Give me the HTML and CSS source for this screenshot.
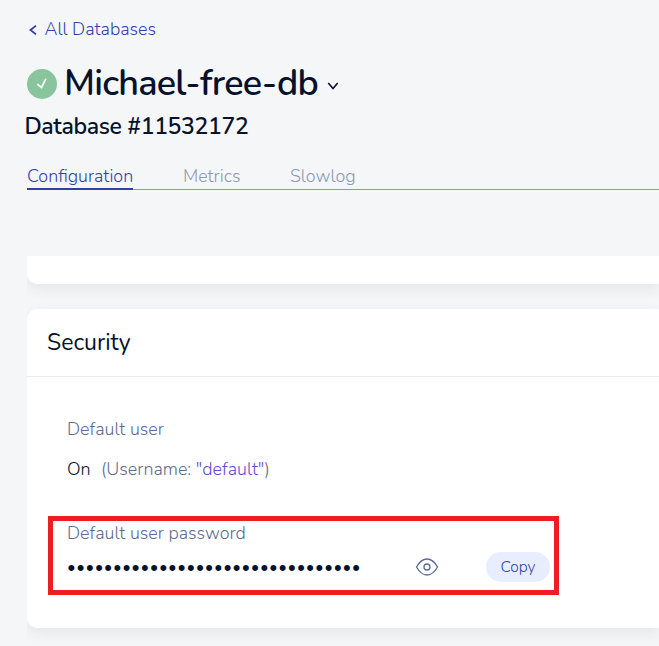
FILE: index.html
```html
<!DOCTYPE html>
<html lang="en">
<head>
<meta charset="utf-8">
<title>Michael-free-db</title>
<link rel="stylesheet" href="styles.css">
</head>
<body>
<main class="page">
  <a class="back"><svg class="back-icon" width="8" height="12" viewBox="0 0 8 12"><path d="M7 1.6 1.5 6 7 10.4"/></svg><span>All Databases</span></a>
  <header class="heading">
    <svg class="status" width="30" height="30" viewBox="0 0 30 30"><circle cx="15" cy="15" r="15"/><path d="M10.8 15.5 14.5 18.5 18.6 10.3"/></svg>
    <h1 class="title">Michael-free-db</h1>
    <svg class="chevron" width="12" height="10" viewBox="0 0 12 10"><path d="M1.3 2 6 7.5 10.7 2"/></svg>
  </header>
  <p class="subtitle">Database #11532172</p>
  <nav class="tabs">
    <a class="tab active"><span>Configuration</span></a>
    <a class="tab metrics"><span>Metrics</span></a>
    <a class="tab slowlog"><span>Slowlog</span></a>
  </nav>
  <div class="scroll">
    <section class="card previous"></section>
    <section class="card security">
      <h2 class="card-title"><span>Security</span></h2>
      <div class="card-body">
        <div class="label user-label">Default user</div>
        <div class="user-row"><span class="on">On</span><span class="username">(Username: <span class="value">"default"</span>)</span></div>
        <div class="password-box">
          <div class="label password-label">Default user password</div>
          <div class="password-row">
            <span class="dots">••••••••••••••••••••••••••••••••</span>
            <svg class="eye" width="24" height="20" viewBox="0 0 24 20"><path d="M1.5 10C4.6 4.5 7.8 2 12 2S19.4 4.5 22.5 10C19.4 15.5 16.2 18 12 18S4.6 15.5 1.5 10Z"/><circle cx="12" cy="10" r="3"/></svg>
            <button class="copy">Copy</button>
          </div>
        </div>
      </div>
    </section>
  </div>
</main>
</body>
</html>
```

FILE: styles.css
```css
* { box-sizing: border-box; }
body {
  margin: 0;
  height: 646px;
  overflow: hidden;
  background: #f5f6f8;
  color: #06112b;
  font-family: Nunito, "Open Sans", "Noto Sans", sans-serif;
  font-size: 17.9px;
  font-weight: 330;
}
h1, h2, p { margin: 0; font-weight: 400; }
svg { flex: none; fill: none; }
.page { padding: 17px 0 0 27px; white-space: nowrap; }
.back { display: flex; align-items: center; height: 24px; color: #323fa9; }
.back-icon { margin: 2px 7.5px 0 2px; stroke: #323fa9; stroke-width: 1.8; }
.heading { display: flex; align-items: center; height: 50px; margin-top: 17px; }
.status { margin-top: 2px; margin-right: 7px; }
.status circle { fill: #89c59c; }
.status path { stroke: #fff; stroke-width: 1.7; stroke-linecap: round; }
.title { width: 255px; padding-top: 2px; font-size: 36px; line-height: 50px; font-weight: 600; letter-spacing: -.77px; }
.chevron { margin: 6px 0 0 8px; stroke: #06112b; stroke-width: 1.6; }
.subtitle { height: 32px; margin: 2px 0 0 -2.6px; font-size: 23px; line-height: 34px; font-weight: 600; letter-spacing: -.34px; }
.tabs { display: flex; height: 28px; margin-top: 20px; border-bottom: 1px solid #8c99b3; color: #8c99b3; }
.tab { height: 28px; line-height: 28px; margin-right: 50px; }
.tab.active { width: 106px; height: 28px; color: #323fa9; border-bottom: 2px solid #323fa9; }
.metrics { width: 57px; }
.scroll { height: 390px; margin-top: 66px; overflow: hidden; }
.card { background: #fff; border-radius: 10px 0 0 10px; box-shadow: 0 5px 14px rgba(50, 55, 65, .08); }
.previous { height: 28px; border-top-left-radius: 0; }
.security { height: 319px; margin-top: 25px; }
.card-title { height: 68px; padding-left: 20px; border-bottom: 1px solid #e7eaf0; font-size: 23px; line-height: 68px; }
.card-body { padding: 40px 0 0 40px; }
.label, .username { color: #5c6b92; }
.label { height: 24px; line-height: 24px; }
.user-row { display: flex; height: 24px; margin-top: 16px; line-height: 24px; }
.on { width: 34px; }
.value { color: #6648d8; }
.password-box { width: 511px; height: 79px; margin: 35px 0 0 -19px; padding-left: 14px; border: 5px solid #ee1c25; }
.password-row { display: flex; align-items: center; height: 30px; margin-top: 7px; }
.dots { width: 348px; padding: 2px 0 0 .6px; font-family: "DejaVu Sans", sans-serif; font-size: 22px; line-height: 30px; letter-spacing: 1.48px; }
.eye { margin: -1px 47px 0 0; stroke: #5c6b92; stroke-width: 1.3; }
.copy { width: 64px; height: 30px; padding: 0 0 2px; border: 0; border-radius: 15px; background: #e8eeff; color: #323fa9; font: inherit; font-size: 15.5px; }
```
